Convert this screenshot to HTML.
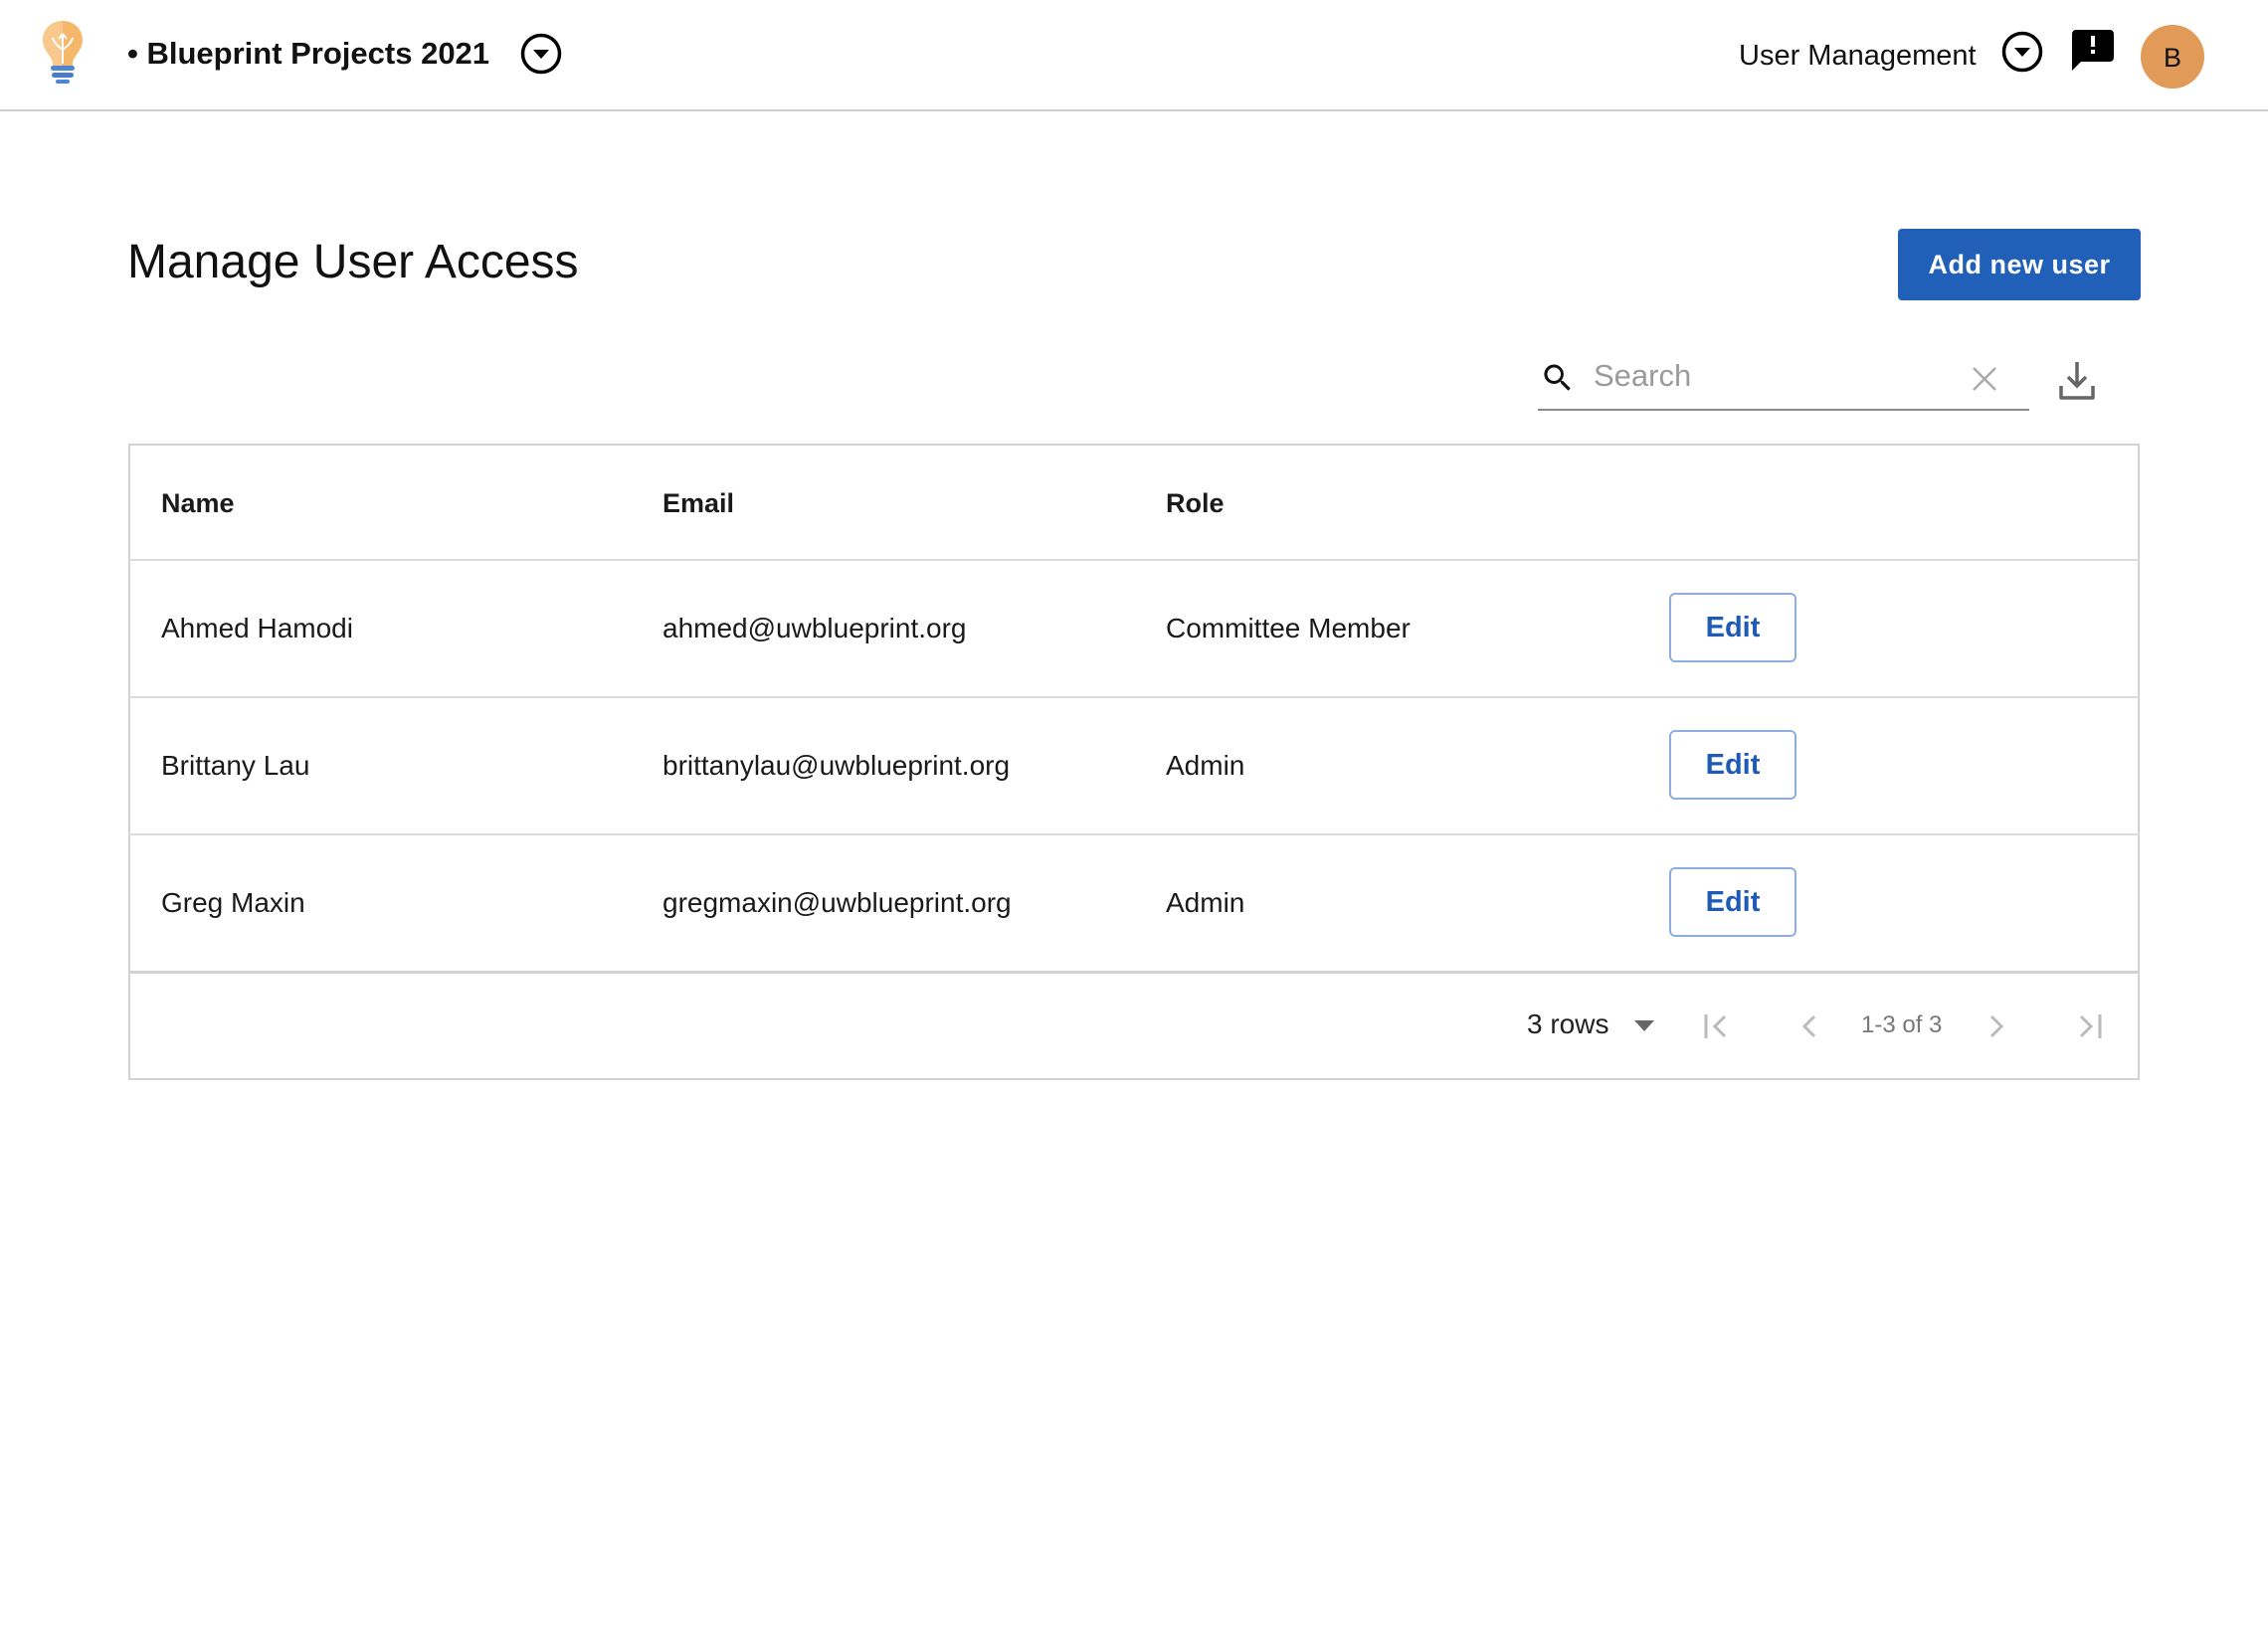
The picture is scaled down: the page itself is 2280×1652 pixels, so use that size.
<!DOCTYPE html>
<html><head><meta charset="utf-8"><style>
*{margin:0;padding:0;box-sizing:border-box}
body{width:2280px;height:1652px;background:#fff;font-family:"Liberation Sans",Arial,sans-serif;color:#1a1a1a;position:relative;overflow:hidden}
.a{position:absolute;white-space:nowrap}
.hdr{position:absolute;left:0;top:0;width:2280px;height:112px;border-bottom:2px solid #cfcfcf}
.t{font-size:28px;color:#1a1a1a}
.th{font-size:27px;font-weight:bold;color:#1a1a1a}
.edit{position:absolute;left:1678px;width:128px;height:70px;border:2px solid #8eaee0;border-radius:6px;color:#1f5bb5;font-size:29px;font-weight:bold;text-align:center;line-height:66px}
.hl{position:absolute;left:129px;width:2022px;height:2px;background:#dcdcdc}
</style></head><body>
<div class="hdr"></div>
<svg class="a" style="left:40px;top:20px" width="46" height="66" viewBox="0 0 46 66">
<path d="M23 1C11 1 3 10 3 20c0 8 5 13 8 18 2 3 2 5 2 8h20c0-3 0-5 2-8 3-5 8-10 8-18C43 10 35 1 23 1z" fill="#f5b86a"/>
<path d="M23 1C11 1 3 10 3 20c0 8 5 13 8 18 2 3 2 5 2 8h10V1z" fill="#f8c88c"/>
<path d="M23 44V14M23 14l-4 5M23 14l4 5M23 30c-4-3-8-6-10-12M23 30c4-3 8-6 10-12" stroke="#fff" stroke-width="2" fill="none"/>
<rect x="11" y="46" width="24" height="5" rx="2.5" fill="#4d86d6"/>
<rect x="12" y="53" width="22" height="5" rx="2.5" fill="#4a7ccb"/>
<rect x="16" y="60" width="14" height="4" rx="2" fill="#4d86d6"/>
</svg>
<div class="a" style="left:128px;top:36px;font-size:31px;font-weight:bold;color:#111">• Blueprint Projects 2021</div>
<svg class="a" style="left:522px;top:32px" width="44" height="44" viewBox="0 0 44 44"><circle cx="22" cy="22" r="18.5" fill="none" stroke="#000" stroke-width="3.5"/><path d="M14 18h16l-8 9z" fill="#000"/></svg>
<div class="a" style="left:1748px;top:40px;font-size:29px;color:#111">User Management</div>
<svg class="a" style="left:2011px;top:30px" width="44" height="44" viewBox="0 0 44 44"><circle cx="22" cy="22" r="18.5" fill="none" stroke="#000" stroke-width="3.5"/><path d="M14 18h16l-8 9z" fill="#000"/></svg>
<svg class="a" style="left:2083px;top:30px" width="42" height="42" viewBox="0 0 42 42"><path d="M4 0h34a4 4 0 0 1 4 4v24a4 4 0 0 1-4 4H9l-9 9V4a4 4 0 0 1 4-4z" fill="#000"/><rect x="19" y="6" width="4" height="11" fill="#fff"/><rect x="19" y="20" width="4" height="4" fill="#fff"/></svg>
<div class="a" style="left:2152px;top:25px;width:64px;height:64px;border-radius:50%;background:#e19a58;text-align:center;line-height:66px;font-size:27px;color:#111">B</div>

<div class="a" style="left:128px;top:236px;font-size:48px;color:#111">Manage User Access</div>
<div class="a" style="left:1908px;top:230px;width:244px;height:72px;background:#2160b8;border-radius:4px;color:#fff;font-size:27px;font-weight:bold;text-align:center;line-height:72px;letter-spacing:0.5px">Add new user</div>

<svg class="a" style="left:1548px;top:362px" width="36" height="36" viewBox="0 0 24 24"><path d="M15.5 14h-.8l-.3-.3A6.5 6.5 0 1 0 9.5 16a6.5 6.5 0 0 0 4.2-1.6l.3.3v.8l5 5 1.5-1.5-5-5zm-6 0a4.5 4.5 0 1 1 0-9 4.5 4.5 0 0 1 0 9z" fill="#111"/></svg>
<div class="a" style="left:1602px;top:360px;font-size:31px;color:#9a9a9a">Search</div>
<svg class="a" style="left:1982px;top:368px" width="26" height="26" viewBox="0 0 26 26"><path d="M2 2l22 22M24 2L2 24" stroke="#aaa" stroke-width="2.5"/></svg>
<div class="a" style="left:1546px;top:411px;width:494px;height:2px;background:#8a8a8a"></div>
<svg class="a" style="left:2069px;top:362px" width="38" height="42" viewBox="0 0 38 42"><path d="M19 2v24M10 17l9 9 9-9" stroke="#666" stroke-width="3.5" fill="none"/><path d="M3 26v12h32V26" stroke="#666" stroke-width="3.5" fill="none" stroke-linejoin="round"/></svg>

<div class="a" style="left:129px;top:446px;width:2022px;height:640px;border:2px solid #d2d2d2"></div>
<div class="hl" style="top:562px"></div>
<div class="hl" style="top:700px"></div>
<div class="hl" style="top:838px"></div>
<div class="hl" style="top:976px;height:3px;background:#d2d2d2"></div>

<div class="a th" style="left:162px;top:491px">Name</div>
<div class="a th" style="left:666px;top:491px">Email</div>
<div class="a th" style="left:1172px;top:491px">Role</div>

<div class="a t" style="left:162px;top:616px">Ahmed Hamodi</div>
<div class="a t" style="left:666px;top:616px">ahmed@uwblueprint.org</div>
<div class="a t" style="left:1172px;top:616px">Committee Member</div>
<div class="edit" style="top:596px">Edit</div>

<div class="a t" style="left:162px;top:754px">Brittany Lau</div>
<div class="a t" style="left:666px;top:754px">brittanylau@uwblueprint.org</div>
<div class="a t" style="left:1172px;top:754px">Admin</div>
<div class="edit" style="top:734px">Edit</div>

<div class="a t" style="left:162px;top:892px">Greg Maxin</div>
<div class="a t" style="left:666px;top:892px">gregmaxin@uwblueprint.org</div>
<div class="a t" style="left:1172px;top:892px">Admin</div>
<div class="edit" style="top:872px">Edit</div>

<div class="a" style="left:1535px;top:1014px;font-size:28px;color:#222">3 rows</div>
<svg class="a" style="left:1643px;top:1026px" width="20" height="12" viewBox="0 0 20 12"><path d="M0 0h20L10 11z" fill="#666"/></svg>
<svg class="a" style="left:1712px;top:1018px" width="30" height="28" viewBox="0 0 30 28"><path d="M3 2v24" stroke="#bbb" stroke-width="3"/><path d="M22 4L12 14l10 10" stroke="#bbb" stroke-width="3" fill="none"/></svg>
<svg class="a" style="left:1810px;top:1018px" width="20" height="28" viewBox="0 0 20 28"><path d="M14 4L4 14l10 10" stroke="#bbb" stroke-width="3" fill="none"/></svg>
<div class="a" style="left:1871px;top:1017px;font-size:24px;color:#777">1-3 of 3</div>
<svg class="a" style="left:1997px;top:1018px" width="20" height="28" viewBox="0 0 20 28"><path d="M5 4l10 10-10 10" stroke="#bbb" stroke-width="3" fill="none"/></svg>
<svg class="a" style="left:2085px;top:1018px" width="30" height="28" viewBox="0 0 30 28"><path d="M26 2v24" stroke="#bbb" stroke-width="3"/><path d="M7 4l10 10-10 10" stroke="#bbb" stroke-width="3" fill="none"/></svg>
</body></html>
